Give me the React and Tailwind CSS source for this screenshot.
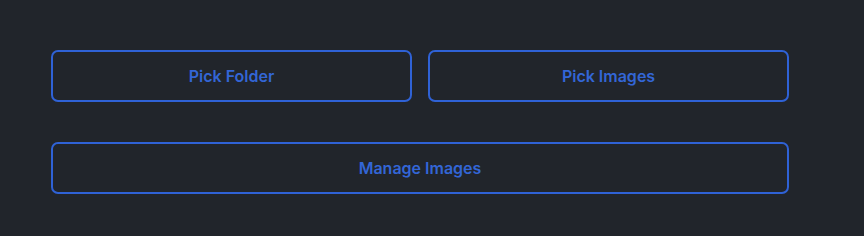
export default function App() {
  const btn =
    'h-[52px] rounded-[7px] border-2 border-[#2f62d6] bg-transparent text-[16px] font-semibold text-[#3366d6]'

  return (
    <div className="min-h-[236px] w-[864px] bg-[#21252b] pl-[51px] pt-[50px]" style={{ fontFamily: 'Inter, "Noto Sans", sans-serif' }}>
      <div className="grid w-[738px] grid-cols-2 gap-x-[16px] gap-y-[40px]">
        <button className={btn}>Pick Folder</button>
        <button className={btn}>Pick Images</button>
        <button className={`${btn} col-span-2`}>Manage Images</button>
      </div>
    </div>
  )
}
